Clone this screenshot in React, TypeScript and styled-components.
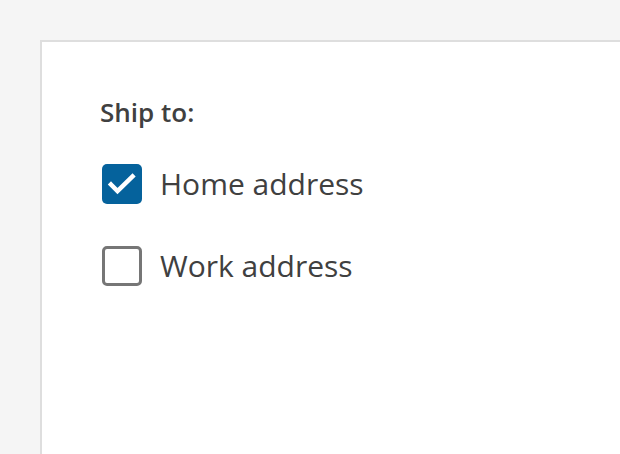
import React, { useState } from "react";
import styled, { createGlobalStyle } from "styled-components";

const GlobalStyle = createGlobalStyle`
  html, body {
    margin: 0;
    padding: 0;
    background: #f5f5f5;
    font-family: "Open Sans", "Noto Sans", sans-serif;
    overflow: hidden;
  }
`;

const Page = styled.div`
  width: 620px;
  height: 454px;
  padding: 40px 0 0 40px;
  box-sizing: border-box;
  overflow: hidden;
`;

const Card = styled.div`
  background: #ffffff;
  border: 2px solid #dedede;
  border-right: none;
  border-bottom: none;
  width: 580px;
  height: 414px;
  box-sizing: border-box;
  padding: 54px 0 0 58px;
`;

const Fieldset = styled.fieldset`
  border: none;
  margin: 0;
  padding: 0;
  display: flex;
  flex-direction: column;
`;

const Legend = styled.legend`
  padding: 0;
  font-size: 26px;
  font-weight: 600;
  color: #404040;
  line-height: 32px;
  margin-bottom: 36px;
`;

const Option = styled.label`
  display: flex;
  align-items: center;
  gap: 18px;
  cursor: pointer;
  font-size: 30px;
  color: #404040;
  line-height: 40px;
  & + & {
    margin-top: 42px;
  }
`;

const HiddenInput = styled.input`
  position: absolute;
  opacity: 0;
  width: 0;
  height: 0;
`;

const Box = styled.span<{ $checked: boolean }>`
  width: 40px;
  height: 40px;
  margin-left: 2px;
  box-sizing: border-box;
  border-radius: 5px;
  flex: none;
  display: flex;
  align-items: center;
  justify-content: center;
  background: ${(p) => (p.$checked ? "#05629c" : "#ffffff")};
  border: ${(p) => (p.$checked ? "none" : "3px solid #767676")};
`;

const Check = () => (
  <svg width="40" height="40" viewBox="0 0 40 40" aria-hidden="true">
    <path d="M9 20.5 L15.5 27 L30.5 12.5" fill="none" stroke="#fff" strokeWidth="4.5" strokeLinecap="square" strokeLinejoin="miter" />
  </svg>
);

export default function App() {
  const [sel, setSel] = useState<Record<string, boolean>>({ home: true, work: false });
  const opts = [
    { id: "home", label: "Home address" },
    { id: "work", label: "Work address" },
  ];
  return (
    <>
      <GlobalStyle />
      <Page>
        <Card>
          <Fieldset>
            <Legend>Ship to:</Legend>
            {opts.map((o) => (
              <Option key={o.id}>
                <HiddenInput
                  type="checkbox"
                  checked={sel[o.id]}
                  onChange={() => setSel((s) => ({ ...s, [o.id]: !s[o.id] }))}
                />
                <Box $checked={sel[o.id]}>{sel[o.id] && <Check />}</Box>
                {o.label}
              </Option>
            ))}
          </Fieldset>
        </Card>
      </Page>
    </>
  );
}
